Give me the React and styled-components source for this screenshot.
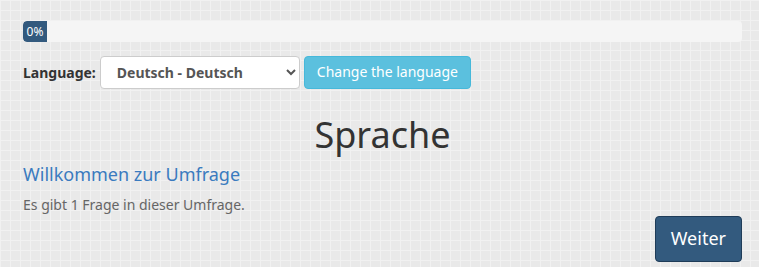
import React from "react";
import styled, { createGlobalStyle } from "styled-components";

const GlobalStyle = createGlobalStyle`
  html, body {
    margin: 0;
    padding: 0;
  }
  body {
    font-family: "Noto Sans", "Open Sans", sans-serif;
    color: #333;
    background-color: #e9e9e9;
    background-image:
      linear-gradient(to right, #f1f1f1 1px, transparent 1px),
      linear-gradient(to bottom, #f1f1f1 1px, transparent 1px);
    background-size: 10px 10px;
    min-height: 267px;
  }
`;

const Page = styled.div`
  padding: 21px 17px 0 23px;
  display: flex;
  flex-direction: column;
`;

const Progress = styled.div`
  height: 21px;
  background: #f5f5f5;
  border-radius: 4px;
  overflow: hidden;
  display: flex;
`;

const ProgressBar = styled.div`
  min-width: 24px;
  background: #335a7e;
  color: #fff;
  font-size: 12px;
  line-height: 21px;
  text-align: center;
  border-radius: 4px 0 0 4px;
`;

const LangRow = styled.form`
  display: flex;
  align-items: center;
  margin-top: 14px;
  gap: 4px;
`;

const Label = styled.label`
  font-weight: 700;
  font-size: 14px;
  color: #333;
`;

const Select = styled.select`
  width: 200px;
  height: 33px;
  border: 1px solid #ccc;
  border-radius: 4px;
  background: #fff;
  font-family: "Noto Sans", sans-serif;
  font-weight: 700;
  font-size: 14px;
  color: #555;
  padding: 0 8px 0 12px;
`;

const Button = styled.button`
  font-family: "Noto Sans", sans-serif;
  color: #fff;
  background: ${(p) => (p.$primary ? "#335a7e" : "#5bc0de")};
  border: 1px solid ${(p) => (p.$primary ? "#1f3c58" : "#46b8da")};
  border-radius: 4px;
  font-size: ${(p) => (p.$primary ? "18px" : "14px")};
  padding: ${(p) => (p.$primary ? "10px 15px" : "6px 12px")};
  line-height: 1.3;
  cursor: pointer;
`;

const Title = styled.h1`
  margin: 26px 0 0;
  text-align: center;
  font-size: 36px;
  font-weight: 400;
  line-height: 1.1;
  color: #333;
`;

const Welcome = styled.h3`
  margin: 9px 0 0;
  font-size: 18px;
  font-weight: 400;
  color: #3a7bbf;
  line-height: 1.2;
`;

const Info = styled.p`
  margin: 10px 0 0;
  font-size: 14px;
  color: #666;
`;

const Footer = styled.div`
  display: flex;
  justify-content: flex-end;
  margin-top: 2px;
`;

export default function App() {
  return (
    <>
      <GlobalStyle />
      <Page>
        <Progress>
          <ProgressBar>0%</ProgressBar>
        </Progress>
        <LangRow>
          <Label>Language:</Label>
          <Select defaultValue="de">
            <option value="de">Deutsch - Deutsch</option>
          </Select>
          <Button type="button">Change the language</Button>
        </LangRow>
        <Title>Sprache</Title>
        <Welcome>Willkommen zur Umfrage</Welcome>
        <Info>Es gibt 1 Frage in dieser Umfrage.</Info>
        <Footer>
          <Button type="button" $primary>
            Weiter
          </Button>
        </Footer>
      </Page>
    </>
  );
}
